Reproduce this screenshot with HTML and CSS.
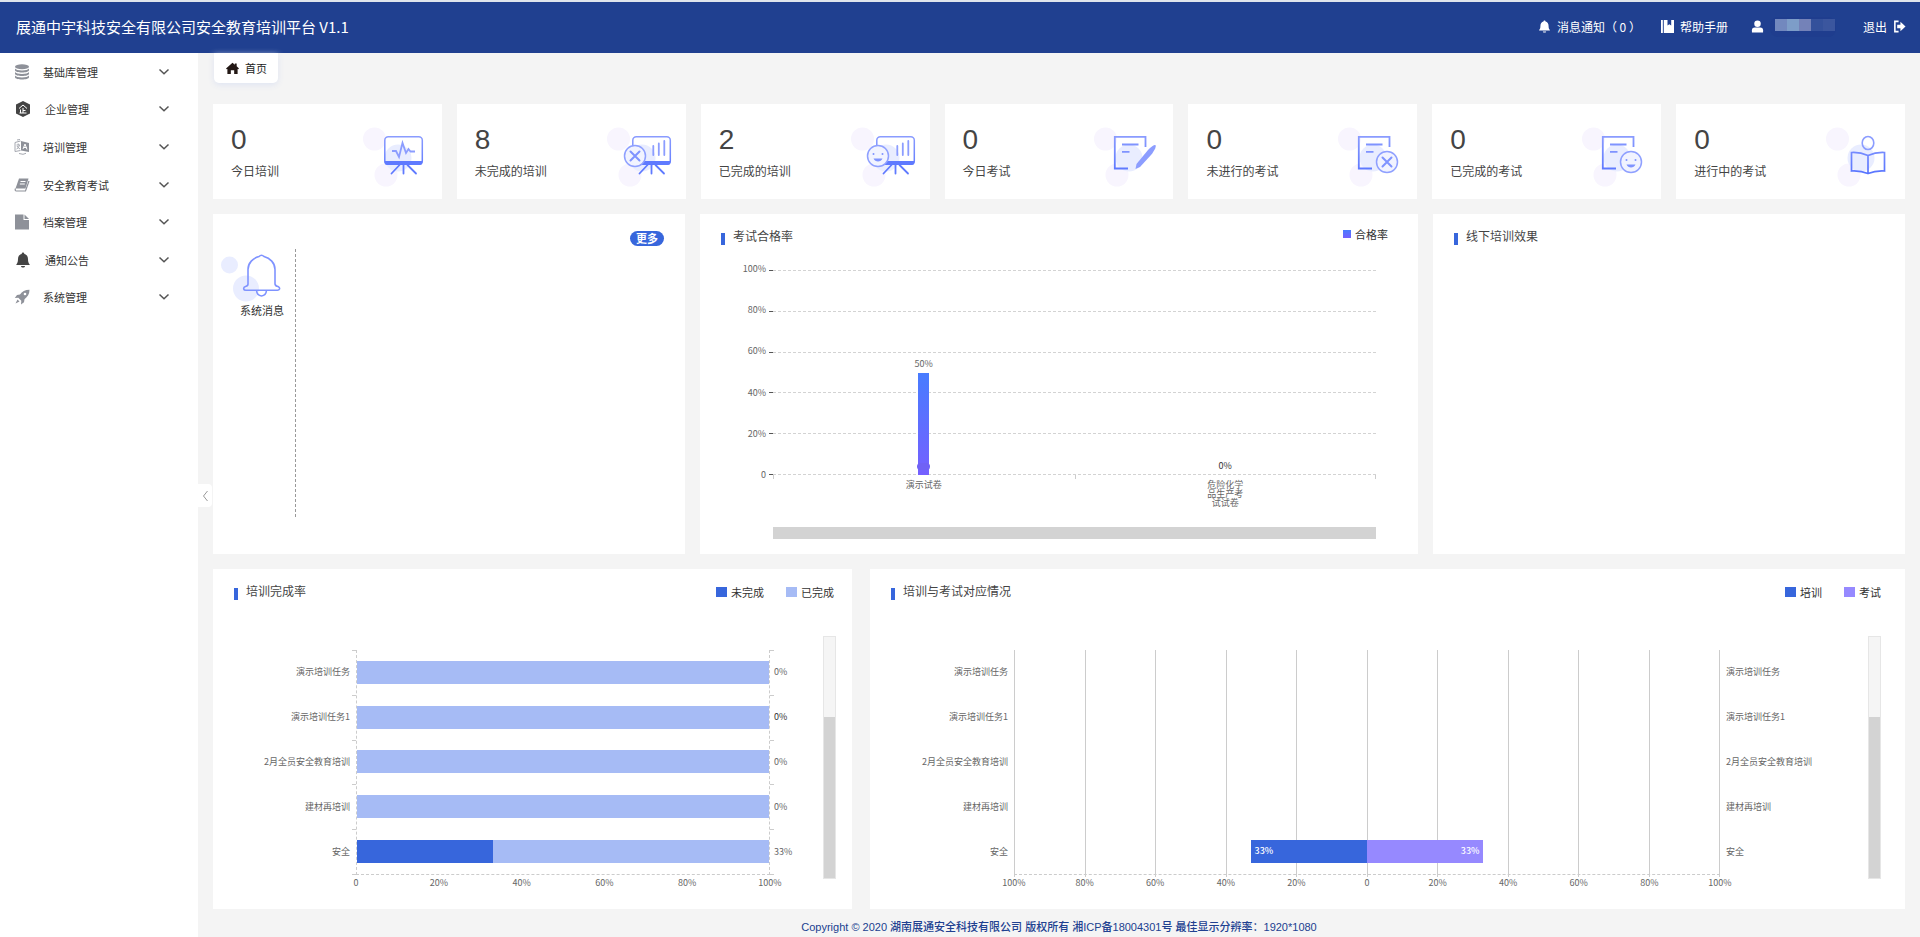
FILE: index.html
```html
<!DOCTYPE html>
<html lang="zh-CN">
<head>
<meta charset="utf-8">
<title>安全教育培训平台</title>
<link rel="stylesheet" href="styles.css">
</head>
<body>
<svg class="defs" aria-hidden="true">
  <defs>
    <linearGradient id="ink" gradientUnits="userSpaceOnUse" x1="0" y1="8" x2="0" y2="48">
      <stop offset="0" stop-color="#8c9dff"/><stop offset="1" stop-color="#5673ff"/>
    </linearGradient>
    <g id="dots">
      <circle cx="12.500" cy="12" r="11.500" fill="#f8f5fe"/>
      <circle cx="24" cy="48" r="11.500" fill="#f8f5fe"/>
      <circle cx="36" cy="31" r="13.500" fill="#e9edff"/>
    </g>
    <symbol id="cross" viewBox="0 0 24 24">
      <circle cx="12" cy="12" r="10.500" fill="#f1f3ff" stroke="#8fa0ff" stroke-width="1.500"/>
      <path d="M7.500 7.500l9 9M16.500 7.500l-9 9" stroke="#7f93ff" stroke-width="2" stroke-linecap="round"/>
    </symbol>
    <symbol id="smile" viewBox="0 0 24 24">
      <circle cx="12" cy="12" r="10.500" fill="#f1f3ff" stroke="#8fa0ff" stroke-width="1.500"/>
      <circle cx="7.500" cy="10" r="1" fill="#7f93ff"/><circle cx="16.500" cy="10" r="1" fill="#7f93ff"/>
      <path d="M7.500 14.500h9c-1.500 4-7.500 4-9 0z" fill="#7f93ff"/>
    </symbol>
    <g id="board">
      <rect x="22.800" y="9.800" width="37.500" height="27.500" rx="3.500" fill="none" stroke="url(#ink)" stroke-width="1.500"/>
      <path d="M22.500 34h38v1.500q0 2.500-3 2.500H25.500q-3 0-3-2.500z" fill="#5f7aff"/>
      <path d="M37.500 38l-8 8.500M41.500 38v8.500M45.500 38l8.500 8.500" stroke="#5f7aff" stroke-width="1.800" stroke-linecap="round"/>
    </g>
    <g id="chart">
      <path d="M47.300 28V19M52.800 28V16.500M58.300 28V14" stroke="#8c9dff" stroke-width="1.800" stroke-linecap="round"/>
    </g>
    <g id="paper">
      <path d="M35 41.500H21.800V9.800H52.500V20" fill="none" stroke="url(#ink)" stroke-width="1.800"/>
      <path d="M29 17.500h16.500M29 24.800h7.500" stroke="#7f93ff" stroke-width="1.800"/>
    </g>
    <symbol id="chev" viewBox="0 0 12 8"><path d="M1.500 1.500L6 5.800l4.500-4.300" fill="none" stroke="#555" stroke-width="1.500"/></symbol>
    <symbol id="bell" viewBox="0 0 16 16"><path d="M8 .5c.8 0 1.300.6 1.300 1.400C11.600 2.500 13 4.500 13 7c0 3 .6 4.200 1.600 5.200v.8H1.400v-.8C2.400 11.200 3 10 3 7c0-2.500 1.400-4.500 3.700-5.100C6.700 1.100 7.200.5 8 .5zM6 14h4c0 2-4 2-4 0z" fill="currentColor"/></symbol>
  </defs>
</svg>

<header class="topbar">
  <h1 class="brand">展通中宇科技安全有限公司安全教育培训平台 V1.1</h1>
  <nav class="tools">
    <a class="tool" href="#"><svg class="tool-icon"><use href="#bell"/></svg>消息通知（ 0 ）</a>
    <a class="tool tool-help" href="#"><svg class="tool-icon" viewBox="0 0 14 14"><path d="M0 0h2v14H0zM3 0h4v6l2-1.500L11 6V0h3v14H3z" fill="#fff"/></svg>帮助手册</a>
    <a class="tool tool-user" href="#" aria-label="用户"><svg class="tool-icon" viewBox="0 0 14 14"><circle cx="7" cy="4" r="3.500" fill="#fff"/><path d="M1 13.500V11q0-3 3-3h6q3 0 3 3v2.500z" fill="#fff"/></svg>
      <span class="mask"><i class="m1"></i><i class="m2"></i><i class="m3"></i><i class="m4"></i><i class="m5"></i></span></a>
    <a class="tool tool-exit" href="#">退出<svg class="tool-icon" viewBox="0 0 14 14"><path d="M6 1.500H2v11h4" fill="none" stroke="#fff" stroke-width="1.700"/><path d="M4.500 5H8V2l5.500 5L8 12V9H4.500z" fill="#fff"/></svg></a>
  </nav>
</header>

<div class="layout">
  <aside class="sidebar">
    <nav class="menu">
      <button class="item"><svg class="item-icon" viewBox="0 0 16 16"><g fill="#8e9199"><ellipse cx="8" cy="2.800" rx="7" ry="2.500"/><path d="M1 4.500c1 2.600 13 2.600 14 0v1.700c0 3-14 3-14 0zM1 8c1 2.600 13 2.600 14 0v1.700c0 3-14 3-14 0zM1 11.500c1 2.600 13 2.600 14 0v1.700c0 3-14 3-14 0z"/></g></svg><span class="item-text">基础库管理</span><svg class="chev"><use href="#chev"/></svg></button>
      <button class="item item-in"><svg class="item-icon" viewBox="0 0 16 16"><path d="M8 0l7 3.500v9L8 16l-7-3.500v-9z" fill="#444"/><path d="M4 7.500L8 4l4 3.500M8 7v5M5.500 8.500V12M8 9.500h2.500M4.500 12h7" fill="none" stroke="#fff"/></svg><span class="item-text">企业管理</span><svg class="chev"><use href="#chev"/></svg></button>
      <button class="item"><svg class="item-icon" viewBox="0 0 16 16"><path d="M7 2l8 2v9l-8-1.500z" fill="#8e9199"/><path d="M9 10l2-5 2 5.500M10 8.500h2.500" fill="none" stroke="#fff"/><path d="M6.500 2L1 3.500v9l5.500-1M2.500 6H6M4.200 4.500V6M5.500 6q-.5 3-3 4M3 7q1 2 3 3M3 1l3-.5M5 14.500l4 .8 3-1" fill="none" stroke="#a5a8b0"/></svg><span class="item-text">培训管理</span><svg class="chev"><use href="#chev"/></svg></button>
      <button class="item"><svg class="item-icon" viewBox="0 0 16 16"><path d="M5 1.500h9.500l-3 10H1.500z" fill="#8e9199"/><path d="M6.500 4.500h5M5.800 7h5" stroke="#fff"/><path d="M1.500 11.500q-1 2.500 1 2.500h9l3.500-10" fill="none" stroke="#8e9199" stroke-width="1.200"/></svg><span class="item-text">安全教育考试</span><svg class="chev"><use href="#chev"/></svg></button>
      <button class="item"><svg class="item-icon" viewBox="0 0 16 16"><path d="M1 .5h8.500V6H15v9.500H1z" fill="#8e9199"/><path d="M10.500.5L15 5h-4.500z" fill="#8e9199"/></svg><span class="item-text">档案管理</span><svg class="chev"><use href="#chev"/></svg></button>
      <button class="item item-in"><svg class="item-icon"><use href="#bell"/></svg><span class="item-text">通知公告</span><svg class="chev"><use href="#chev"/></svg></button>
      <button class="item"><svg class="item-icon" viewBox="0 0 16 16"><path d="M15.500.8C11 .8 8 2.500 6 5.500L3 6 .8 9l3.500-.3 3 3L7 15.500l3-2.300.5-3C13.500 8 15.500 5 15.500.8z" fill="#8e9199"/><circle cx="11" cy="5" r="1.300" fill="#fff"/><path d="M3.500 10.500l-2 4 4-2z" fill="#8e9199"/></svg><span class="item-text">系统管理</span><svg class="chev"><use href="#chev"/></svg></button>
    </nav>
    <button class="fold" aria-label="收起菜单"><svg class="fold-icon" viewBox="0 0 7 12"><path d="M5.500 1L1.500 6l4 5" fill="none" stroke="#999"/></svg></button>
  </aside>

  <main class="main">
    <a class="tab" href="#"><svg class="tab-icon" viewBox="0 0 14 13"><path d="M7 .3l2.500 2.200V1.200h2v3L14 6.500l-.8.9-.7-.4v5.500H8.800V8.500H5.200v4H1.500V7l-.7.4L0 6.500z" fill="#231815"/></svg>首页</a>

    <section class="stats">
      <article class="stat"><div><p class="num">0</p><p class="cap">今日培训</p></div>
        <svg class="art" viewBox="0 0 64 60"><use href="#dots"/><use href="#board"/><path d="M30 24h4l3 6 3.500-14 3.500 10 2.500-4 2 2.500H53" fill="none" stroke="#8c9dff" stroke-width="1.800"/></svg></article>
      <article class="stat"><div><p class="num">8</p><p class="cap">未完成的培训</p></div>
        <svg class="art" viewBox="0 0 64 60"><use href="#dots"/><use href="#board" x="4"/><use href="#chart"/><use href="#cross" x="17" y="17" width="24" height="24"/></svg></article>
      <article class="stat"><div><p class="num">2</p><p class="cap">已完成的培训</p></div>
        <svg class="art" viewBox="0 0 64 60"><use href="#dots"/><use href="#board" x="4"/><use href="#chart"/><use href="#smile" x="16" y="17" width="24" height="24"/></svg></article>
      <article class="stat"><div><p class="num">0</p><p class="cap">今日考试</p></div>
        <svg class="art" viewBox="0 0 64 60"><use href="#dots"/><use href="#paper"/><path d="M62 18c2 0 0 5-4 10L47 40l-4.500 2 1-5L55 23q5-5 7-5z" fill="#8c9dff"/></svg></article>
      <article class="stat"><div><p class="num">0</p><p class="cap">未进行的考试</p></div>
        <svg class="art" viewBox="0 0 64 60"><use href="#dots"/><use href="#paper"/><use href="#cross" x="38" y="23" width="24" height="24"/></svg></article>
      <article class="stat"><div><p class="num">0</p><p class="cap">已完成的考试</p></div>
        <svg class="art" viewBox="0 0 64 60"><use href="#dots"/><use href="#paper"/><use href="#smile" x="38" y="23" width="24" height="24"/></svg></article>
      <article class="stat"><div><p class="num">0</p><p class="cap">进行中的考试</p></div>
        <svg class="art" viewBox="0 0 64 60"><use href="#dots"/><ellipse cx="43" cy="16" rx="5.800" ry="6.500" fill="none" stroke="#8c9dff" stroke-width="1.600"/><path d="M43 28.500q-8-3.500-16.500-3V44q9-.5 16.500 2.500Q50.500 43.500 59.500 44V25.500Q51 25 43 28.500zM43 28.500v18" fill="none" stroke="url(#ink)" stroke-width="1.700"/></svg></article>
    </section>

    <section class="row-mid">
      <article class="panel notice">
        <div class="notice-kind">
          <svg class="notice-art" viewBox="0 0 60 48"><circle cx="8.500" cy="11" r="8.500" fill="#e9edff"/><circle cx="25" cy="34.500" r="13" fill="#e9edff"/><path d="M38 2.500q2.500-2.500 5 0C49 4 54 9 54 15.500V30q.5 2.300 3 2.500 2 1 1.500 2.500-.5 1.300-2 1.300H25q-2 0-2.300-1.300Q22.500 33 24.500 32.500 27 32 27 30V15.500C27 9 32 4 38 2.500zM35.500 36.500q.5 5 5 5.500 4.500-.5 5-5.500" fill="none" stroke="#7f93ff" stroke-width="1.600"/></svg>
          <p class="notice-name">系统消息</p>
        </div>
        <div class="notice-list"></div>
        <button class="more">更多</button>
      </article>

      <article class="panel">
        <div class="head head-pass"><h2 class="title">考试合格率</h2><ul class="legend legend-up"><li class="key"><i class="dot dot-grad"></i>合格率</li></ul></div>
        <div class="pass">
          <div class="y-axis"><span>100%</span><span>80%</span><span>60%</span><span>40%</span><span>20%</span><span>0</span></div>
          <div class="y-ticks"><i></i><i></i><i></i><i></i><i></i></div>
          <div class="lines"><i></i><i></i><i></i><i></i><i></i></div>
          <div class="cols">
            <div class="col"><span class="val">50%</span><i class="colbar" style="height:50%"></i></div>
            <div class="col"><span class="val val-dark">0%</span></div>
          </div>
          <div class="x-names"><span class="x-name"><b>演示试卷</b></span><span class="x-name"><b>危险化学品生产考试试卷</b></span></div>
          <div class="hscroll"></div>
        </div>
      </article>

      <article class="panel"><div class="head"><h2 class="title">线下培训效果</h2></div></article>
    </section>

    <section class="row-low">
      <article class="panel panel-done">
        <div class="head head-done"><h2 class="title">培训完成率</h2><ul class="legend"><li class="key"><i class="dot dot-blue"></i>未完成</li><li class="key"><i class="dot dot-sky"></i>已完成</li></ul></div>
        <div class="hchart done">
          <div class="names names-l"><span>演示培训任务</span><span>演示培训任务1</span><span>2月全员安全教育培训</span><span>建材再培训</span><span>安全</span></div>
          <div class="marks"><i></i><i></i><i></i><i></i><i></i></div>
          <div class="plot">
            <div class="bars bars-done">
              <div class="bar"></div><div class="bar"></div><div class="bar"></div><div class="bar"></div>
              <div class="bar"><i class="part" style="width:33%"></i></div>
            </div>
            <div class="x-axis"><span>0</span><span>20%</span><span>40%</span><span>60%</span><span>80%</span><span>100%</span></div>
          </div>
          <div class="marks"><i></i><i></i><i></i><i></i><i></i></div>
          <div class="names"><span>0%</span><span class="dark">0%</span><span>0%</span><span>0%</span><span>33%</span></div>
          <div class="vscroll"><i></i></div>
        </div>
      </article>

      <article class="panel panel-match">
        <div class="head"><h2 class="title">培训与考试对应情况</h2><ul class="legend"><li class="key"><i class="dot dot-blue"></i>培训</li><li class="key"><i class="dot dot-violet"></i>考试</li></ul></div>
        <div class="hchart match">
          <div class="names names-l names-gap"><span>演示培训任务</span><span>演示培训任务1</span><span>2月全员安全教育培训</span><span>建材再培训</span><span>安全</span></div>
          <div class="plot">
            <div class="stack">
              <div class="vlines"><i></i><i></i><i></i><i></i><i></i><i></i><i></i><i></i><i></i><i></i></div>
              <div class="bars"><div class="pair"></div><div class="pair"></div><div class="pair"></div><div class="pair"></div>
                <div class="pair"><div class="half half-l"><span class="seg seg-l" style="width:33%">33%</span></div><div class="half"><span class="seg seg-r" style="width:33%">33%</span></div></div></div>
            </div>
            <div class="x-axis"><span>100%</span><span>80%</span><span>60%</span><span>40%</span><span>20%</span><span>0</span><span>20%</span><span>40%</span><span>60%</span><span>80%</span><span>100%</span></div>
          </div>
          <div class="names names-gap"><span>演示培训任务</span><span>演示培训任务1</span><span>2月全员安全教育培训</span><span>建材再培训</span><span>安全</span></div>
          <div class="vscroll"><i></i></div>
        </div>
      </article>
    </section>

    <footer class="foot">Copyright © 2020 湖南展通安全科技有限公司 版权所有 湘ICP备18004301号 最佳显示分辨率：1920*1080</footer>
  </main>
</div>
</body>
</html>
```

FILE: styles.css
```css
* { box-sizing: border-box; }
body, h1, h2, p, ul { margin: 0; padding: 0; }
ul { list-style: none; }
i { font-style: normal; display: block; }
a { color: inherit; text-decoration: none; }
button { font: inherit; color: inherit; border: 0; background: none; padding: 0; cursor: pointer; }

body {
  min-height: 100vh;
  display: flex;
  flex-direction: column;
  border-top: 2px solid #dfe5ec;
  background: #f4f4f4;
  color: #444;
  font: 12px/16px "Noto Sans CJK SC", sans-serif;
}
.defs { position: absolute; width: 0; height: 0; }

/* top bar */
.topbar {
  height: 51px;
  padding: 0 14px 2px 16px;
  display: flex;
  align-items: center;
  justify-content: space-between;
  background: #204090;
  color: #fff;
}
.brand { font-size: 15px; line-height: 20px; font-weight: 400; }
.tools { display: flex; align-items: center; }
.tool { display: flex; align-items: center; gap: 6px; }
.tool-icon { width: 13px; height: 13px; }
.tool-help { margin-left: 20px; }
.tool-user { margin-left: 23px; }
.tool-exit { margin-left: 27px; }
.mask { width: 66px; height: 20px; padding: 2px 0 6px 5px; display: flex; border-radius: 8px; background: #1f3d8e; }
.mask i { width: 12px; height: 12px; }
.m1 { background: #7288be; }
.m2 { background: #7d9dc8; }
.m3 { background: #7482b8; }
.m4 { background: #34519b; }
.m5 { background: #3b569e; }

/* sidebar */
.layout { flex: 1; display: flex; }
.sidebar { position: relative; flex: none; width: 198px; background: #fff; color: #333; }
.menu { display: flex; flex-direction: column; height: 263px; }
.item { flex: 1; padding: 0 28px 0 14px; display: flex; align-items: center; font-size: 11px; text-align: left; }
.item-icon { flex: none; width: 16px; height: 16px; margin-right: 13px; color: #444; }
.item-in .item-icon { margin-left: 1px; margin-right: 14px; }
.item-text { flex: 1; }
.chev { width: 12px; height: 8px; }
.fold {
  position: absolute;
  top: 431px;
  left: 198px;
  width: 14px;
  height: 23px;
  display: flex;
  align-items: center;
  justify-content: center;
  border-radius: 0 4px 4px 0;
  background: #fff;
}
.fold-icon { width: 7px; height: 12px; }

/* main */
.main { flex: 1; min-width: 0; padding: 0 15px; display: flex; flex-direction: column; }
.tab {
  align-self: flex-start;
  height: 30px;
  margin-left: 1px;
  padding: 0 11px 0 12px;
  display: flex;
  align-items: center;
  gap: 6px;
  border-radius: 0 0 5px 5px;
  background: #fff;
  color: #222;
  font-size: 11px;
  box-shadow: 0 2px 6px #dfe4f2;
}
.tab-icon { width: 13px; height: 13px; }
.stats { margin-top: 21px; display: grid; grid-template-columns: repeat(7, 1fr); gap: 15px; }
.stat { height: 95px; padding: 0 16px 0 18px; display: flex; align-items: center; justify-content: space-between; background: #fff; }
.num { font: 28px/32px "Liberation Sans", Arial, sans-serif; }
.cap { margin-top: 7px; }
.art { width: 64px; height: 60px; margin-top: 11px; overflow: visible; }
.row-mid { margin-top: 15px; display: grid; grid-template-columns: 472fr 718fr 472fr; gap: 15px; }
.row-low { margin-top: 15px; display: grid; grid-template-columns: 639fr 1035fr; gap: 18px; }
.panel { min-width: 0; min-height: 340px; padding: 0 21px; background: #fff; }

/* notice panel */
.notice { padding-left: 8px; display: flex; align-items: flex-start; }
.notice-kind { width: 75px; padding-top: 40px; }
.notice-art { display: block; width: 60px; height: 48px; }
.notice-name { margin: 0 0 0 19px; font-size: 11px; color: #333; }
.notice-list { flex: 1; height: 268px; margin: 35px 0 0 -1px; border-left: 1px dashed #999; }
.more { margin-top: 17px; width: 34px; height: 15px; border-radius: 8px; background: #3766dc; color: #fff; font-size: 11px; line-height: 15px; font-weight: 700; }

/* panel heading */
.head { height: 46px; display: flex; align-items: center; justify-content: space-between; }
.head-pass { padding-right: 9px; }
.head-done { padding-right: 2px; }
.title { margin-bottom: 2px; display: flex; align-items: center; gap: 8px; font-size: 12px; line-height: 16px; font-weight: 400; }
.title::before { content: ""; width: 4px; height: 12px; margin-top: 6px; background: #3766dc; }
.legend { display: flex; gap: 22px; font-size: 11px; color: #333; }
.legend-up { margin-bottom: 6px; }
.key { display: flex; align-items: center; gap: 4px; }
.dot { width: 11px; height: 10px; }
.dot-blue { background: #3766dc; }
.dot-sky { background: #a6bbf5; }
.dot-violet { background: #9689ff; }
.dot-grad { width: 8px; height: 8px; background: linear-gradient(#487cff, #7560ff); }

/* pass-rate chart */
.pass {
  margin-top: 10px;
  padding-right: 21px;
  display: grid;
  grid-template-columns: 48px 4px 1fr;
  grid-template-rows: 205px auto auto;
  font-size: 9px;
  line-height: 12px;
  color: #666;
}
.y-axis { margin: -7px 0 -6px; padding-right: 3px; display: flex; flex-direction: column; justify-content: space-between; text-align: right; }
.y-ticks, .lines { display: flex; flex-direction: column; }
.y-ticks i { flex: 1; border-top: 1px solid #555; }
.y-ticks i:last-child { border-bottom: 1px solid #555; }
.lines { grid-area: 1 / 3; }
.lines i { flex: 1; border-top: 1px dashed #d3d3d3; }
.lines i:last-child { border-bottom: 1px dashed #d3d3d3; }
.cols { grid-area: 1 / 3; display: flex; }
.col { flex: 1; display: flex; flex-direction: column; justify-content: flex-end; align-items: center; }
.val { margin-bottom: 3px; }
.val-dark, .dark { color: #333; }
.colbar { flex: none; width: 11px; display: flex; align-items: flex-end; background: linear-gradient(#487cff, #7560ff); }
.colbar::after { content: ""; flex: none; width: 13px; height: 7px; margin: 0 -1px 5px; border-radius: 4px; background: #7062f5; }
.x-names { grid-area: 2 / 3; display: flex; }
.x-name { flex: 1; display: flex; flex-direction: column; align-items: center; line-height: 9px; text-align: center; }
.x-name::before { content: ""; align-self: stretch; height: 4px; border-left: 1px solid #ccc; }
.x-name:last-child::before { border-right: 1px solid #ccc; }
.x-name b { width: 38px; padding: 1px 1px 0; font-weight: 400; }
.hscroll { grid-area: 3 / 3; height: 12px; margin-top: 20px; background: #d3d3d3; }

/* horizontal bar charts */
.panel-done { padding-right: 16px; }
.panel-match { padding-right: 24px; }
.hchart { margin-top: 21px; display: grid; font-size: 9px; line-height: 12px; color: #666; }
.done { grid-template-columns: 118px 4px 1fr 4px 49px 13px; }
.match { grid-template-columns: 123px 1fr 148px 13px; }
.names { height: 224px; margin-top: 14px; display: flex; flex-direction: column; white-space: nowrap; }
.names span { flex: 1; display: flex; align-items: center; }
.names-l { padding-right: 2px; }
.names-l span { justify-content: flex-end; }
.names-gap { padding: 0 6px; }
.marks { height: 225px; margin-top: 14px; display: flex; flex-direction: column; }
.marks i { flex: 1; border-top: 1px solid #ccc; }
.marks i:last-child { border-bottom: 1px solid #ccc; }
.plot { min-width: 0; padding-top: 14px; }
.bars { height: 225px; display: flex; flex-direction: column; justify-content: space-around; border-bottom: 1px dashed #ccc; }
.bars-done { border-left: 1px dashed #ccc; border-right: 1px dashed #ccc; }
.bar { height: 23px; background: #a6bbf5; }
.part { height: 100%; background: #3766dc; }
.stack { display: grid; }
.vlines { grid-area: 1 / 1; height: 227px; margin-bottom: -2px; display: flex; }
.vlines i { flex: 1; border-left: 1px solid #ccc; }
.vlines i:last-child { border-right: 1px solid #ccc; }
.stack .bars { grid-area: 1 / 1; }
.pair { height: 23px; display: flex; }
.half { flex: 1; display: flex; }
.half-l { justify-content: flex-end; }
.seg { padding: 0 4px; line-height: 22px; color: #fff; font-weight: 500; }
.seg-l { background: #3766dc; }
.seg-r { background: #9689ff; text-align: right; }
.x-axis { padding-top: 2px; display: flex; justify-content: space-between; }
.x-axis span { width: 0; display: flex; justify-content: center; white-space: nowrap; }
.vscroll { height: 243px; display: flex; align-items: flex-end; border: 1px solid #e6e6e6; background: #f5f5f5; }
.vscroll i { width: 100%; height: 67%; background: #d3d3d3; }

.foot { padding: 10px 0 2px; text-align: center; font: 500 11px/16px "Liberation Sans", "Noto Sans CJK SC", sans-serif; color: #204090; }
```
